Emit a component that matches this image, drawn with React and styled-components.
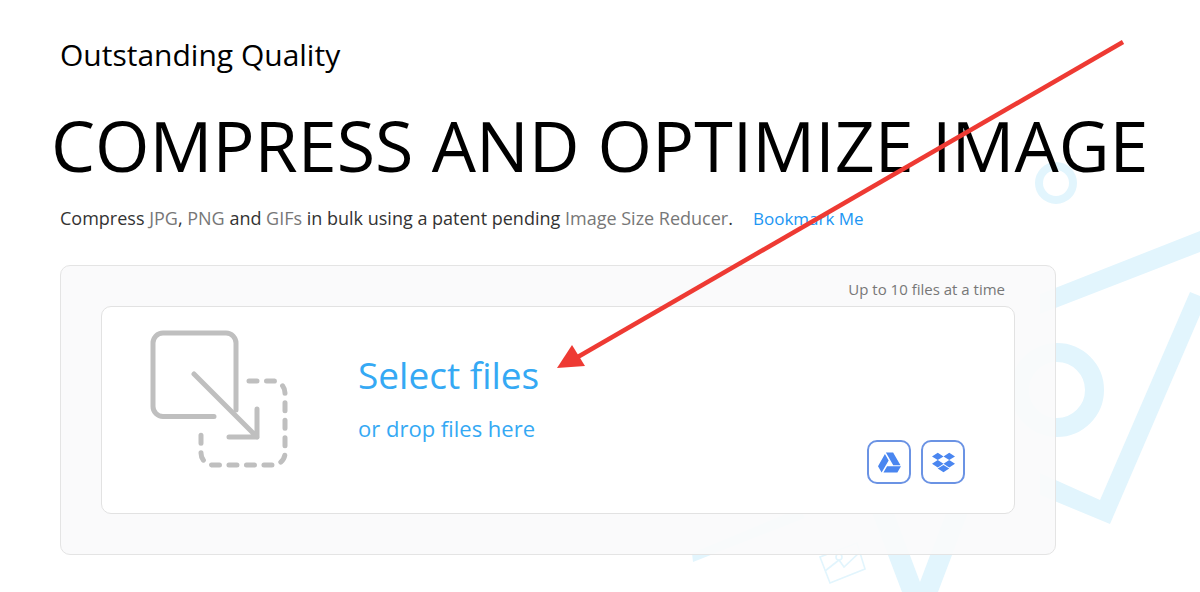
import React from 'react';
import styled, { createGlobalStyle } from 'styled-components';
import { FaGoogleDrive, FaDropbox } from 'react-icons/fa';

const GlobalStyle = createGlobalStyle`
  html, body {
    margin: 0;
    padding: 0;
    background: #fff;
    font-family: "Open Sans", "Liberation Sans", sans-serif;
  }
`;

const Page = styled.div`
  position: relative;
  width: 1200px;
  height: 592px;
  overflow: hidden;
`;

const Backdrop = styled.svg`
  position: absolute;
  top: 0;
  left: 0;
  width: 1200px;
  height: 592px;
  z-index: 0;
`;

const ArrowOverlay = styled.svg`
  position: absolute;
  top: 0;
  left: 0;
  width: 1200px;
  height: 592px;
  z-index: 3;
  pointer-events: none;
`;

const Content = styled.div`
  position: relative;
  z-index: 1;
  display: flex;
  flex-direction: column;
  padding: 36px 144px 0 60px;
`;

const Tagline = styled.div`
  font-size: 30px;
  line-height: 38px;
  color: #000;
`;

const Title = styled.h1`
  margin: 23px -84px 0 -9px;
  font-size: 70px;
  line-height: 96px;
  font-weight: 400;
  color: #000;
  white-space: nowrap;
`;

const Intro = styled.p`
  margin: 13px 0 0;
  font-size: 18px;
  line-height: 24px;
  color: #333;
  white-space: nowrap;
`;

const Format = styled.span`
  color: #777;
`;

const Bookmark = styled.a`
  margin-left: 20px;
  font-size: 17px;
  color: #2196f3;
`;

const Panel = styled.section`
  margin-top: 34px;
  width: 996px;
  height: 290px;
  box-sizing: border-box;
  padding: 12px 40px 0;
  background: rgba(250, 250, 251, 0.93);
  border: 1px solid #e4e4e4;
  border-radius: 10px;
`;

const Limit = styled.div`
  padding-right: 10px;
  text-align: right;
  font-size: 15px;
  line-height: 22px;
  color: #777;
`;

const DropCard = styled.div`
  display: flex;
  box-sizing: border-box;
  margin-top: 6px;
  height: 208px;
  padding: 23px 49px 29px 48px;
  background: #fff;
  border: 1px solid #e2e2e2;
  border-radius: 10px;
`;

const DropIcon = styled.svg`
  flex: none;
  width: 138px;
  height: 138px;
`;

const DropText = styled.div`
  display: flex;
  flex-direction: column;
  margin-left: 70px;
  color: #35a9f4;
`;

const SelectLabel = styled.div`
  margin-top: 20px;
  font-size: 37px;
  line-height: 50px;
`;

const DropLabel = styled.div`
  margin-top: 13px;
  font-size: 22px;
  line-height: 30px;
`;

const Sources = styled.div`
  display: flex;
  align-self: flex-end;
  gap: 10px;
  margin-left: auto;
`;

const SourceButton = styled.button`
  display: flex;
  align-items: center;
  justify-content: center;
  box-sizing: border-box;
  width: 44px;
  height: 44px;
  padding: 0;
  background: #fff;
  border: 2px solid #6b93e4;
  border-radius: 10px;
  color: #4a86f0;
  font-size: 23px;
`;

const App = () => (
  <Page>
    <GlobalStyle />
    <Backdrop viewBox="0 0 1200 592">
      <g fill="#e2f5fd">
        <polygon points="1040,294 1200,231 1200,252 1040,314" />
        <polygon points="1040,473 1100,500 1190,292 1200,296 1200,315 1110,524 1040,495" />
        <polygon points="869,505 891,505 920,582 949,505 971,505 938,592 902,592" />
        <polygon points="692,553 693,562 805,518 800,508" />
      </g>
      <circle cx="1056" cy="183" r="17" fill="none" stroke="#e2f5fd" strokeWidth="8" />
      <circle cx="1057" cy="390" r="37.5" fill="none" stroke="#e2f5fd" strokeWidth="19" />
      <g fill="none" stroke="#e2f5fd" strokeWidth="1.6">
        <polygon points="820,557 830,583 865,569 857,543" />
        <polyline points="825,571 839,560 844,567 860,552" />
        <circle cx="839" cy="557" r="3" />
      </g>
    </Backdrop>

    <Content>
      <Tagline>Outstanding Quality</Tagline>
      <Title>COMPRESS AND OPTIMIZE IMAGE</Title>
      <Intro>
        Compress <Format>JPG</Format>, <Format>PNG</Format> and <Format>GIFs</Format> in bulk using a
        patent pending <Format>Image Size Reducer</Format>.
        <Bookmark>Bookmark Me</Bookmark>
      </Intro>
      <Panel>
        <Limit>Up to 10 files at a time</Limit>
        <DropCard>
          <DropIcon viewBox="30 30 138 138" fill="none" stroke="#bfbfbf" strokeWidth="5" strokeLinecap="round" strokeLinejoin="round">
            <path d="M94 116.5H43a10 10 0 0 1-10-10V43a10 10 0 0 1 10-10h63a10 10 0 0 1 10 10v67" />
            <path d="M74 74l63 63M137 109v28h-28" />
            <path strokeDasharray="8 9.5" d="M129 81h24a12 12 0 0 1 12 12v60a12 12 0 0 1-12 12H93a12 12 0 0 1-12-12v-26" />
          </DropIcon>
          <DropText>
            <SelectLabel>Select files</SelectLabel>
            <DropLabel>or drop files here</DropLabel>
          </DropText>
          <Sources>
            <SourceButton><FaGoogleDrive /></SourceButton>
            <SourceButton><FaDropbox /></SourceButton>
          </Sources>
        </DropCard>
      </Panel>
    </Content>

    <ArrowOverlay viewBox="0 0 1200 592">
      <line x1="1123" y1="42" x2="576" y2="358" stroke="#ee3a33" strokeWidth="4.5" />
      <polygon points="557,368 572,345 585,366" fill="#ee3a33" />
    </ArrowOverlay>
  </Page>
);

export default App;
